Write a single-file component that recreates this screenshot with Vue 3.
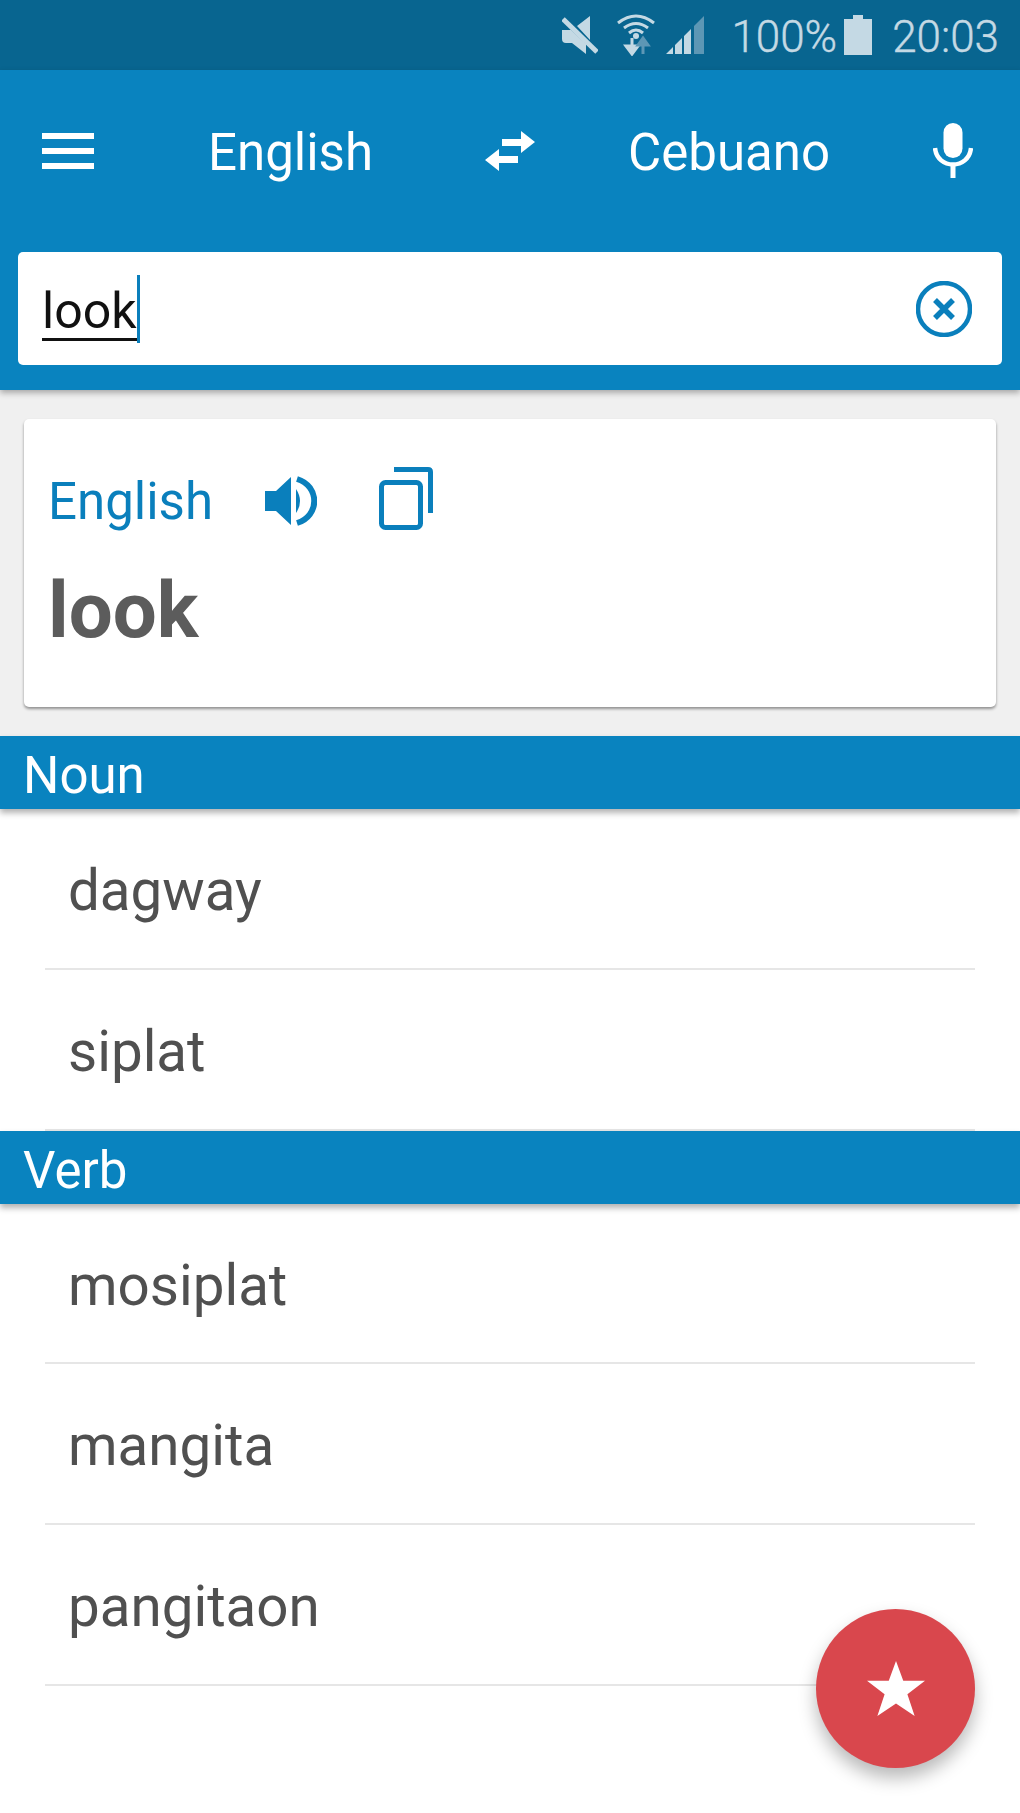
<template>
  <div class="app">
    <div class="status-bar">
      <svg class="st-mute" viewBox="0 0 36 38">
        <path class="st-fill" d="M0 14 L9 14 L24 28 L24 38 L10 27 L4 27 Q0 27 0 23 Z M15 10 L28 0 L28 24 Z" />
        <path class="st-line" d="M1 3 L35 36" />
      </svg>
      <svg class="st-wifi" viewBox="0 0 38 42">
        <path class="st-arc" d="M1 9 Q19 -5 37 9 M7 14 Q19 5 31 14 M12 19 Q19 13 26 19" />
        <circle cx="19" cy="22" r="3" fill="#c4d9e4" />
        <path class="st-arrow" d="M15 24 V33 M9 32 L15 40 L21 32 Z" />
        <path class="st-arrow dim" d="M26 40 V30 M21 31 L26 24 L31 31 Z" />
      </svg>
      <svg class="st-signal" viewBox="0 0 39 38">
        <path fill="#c4d9e4" d="M0 38 L7 31 V38 Z M9 29 L16 22 V38 H9 Z M18 20 L25 13 V38 H18 Z" />
        <path fill="#5d97b5" d="M28 10 L38 0 V38 H28 Z" />
      </svg>
      <span class="st-text">100%</span>
      <svg class="st-battery" viewBox="0 0 28 40">
        <path fill="#c4d9e4" d="M9 0 H19 V4 H28 V40 H0 V4 H9 Z" />
      </svg>
      <span class="st-text st-time">20:03</span>
    </div>

    <header class="toolbar">
      <div class="lang-row">
        <div class="menu-icon"><i></i><i></i><i></i></div>
        <span class="lang lang-from">English</span>
        <svg class="swap-icon" viewBox="0 0 50 40">
          <path fill="#fff" d="M36 0 L50 11 L36 22 V15 H17 V8 H36 Z M14 18 V25 H33 V32 H14 V40 L0 29 Z" />
        </svg>
        <span class="lang lang-to">Cebuano</span>
        <svg class="mic-icon" viewBox="0 0 40 55">
          <rect x="10.5" y="0" width="19" height="35" rx="9.5" fill="#fff" />
          <path d="M2 25 C4 47 36 47 38 25" fill="none" stroke="#fff" stroke-width="4.5" />
          <path d="M20 40 V55" stroke="#fff" stroke-width="5" />
        </svg>
      </div>
      <div class="search-box">
        <span class="search-text">look</span><span class="caret"></span>
        <svg class="clear-icon" viewBox="0 0 56 56">
          <circle cx="28" cy="28" r="26" fill="none" stroke="#0a7fbc" stroke-width="4.5" />
          <path d="M19 19 L37 37 M37 19 L19 37" stroke="#0a7fbc" stroke-width="5.5" />
        </svg>
      </div>
    </header>

    <div class="source-wrap">
      <div class="card">
        <div class="card-head">
          <span class="card-lang">English</span>
          <svg class="speak-icon" viewBox="0 0 52 50">
            <path fill="#0a7fbc" d="M0 15 H11 L26 1 V49 L11 35 H0 Z" />
            <path fill="#0a7fbc" d="M31 13 Q39 25 31 37 Z" />
            <path d="M32 3 C55 10 55 40 32 47" fill="none" stroke="#0a7fbc" stroke-width="6" />
          </svg>
          <svg class="copy-icon" viewBox="0 0 54 63">
            <rect x="2.5" y="15.5" width="39" height="45" rx="4" fill="none" stroke="#0a7fbc" stroke-width="5" />
            <path d="M15 2.5 H49 Q51.5 2.5 51.5 5 V46" fill="none" stroke="#0a7fbc" stroke-width="5" />
          </svg>
        </div>
        <div class="card-word">look</div>
      </div>
    </div>

    <section v-for="group in groups" :key="group.name">
      <div class="band">{{ group.name }}</div>
      <ul class="words">
        <li v-for="w in group.words" :key="w">{{ w }}</li>
      </ul>
    </section>

    <button class="fab">
      <svg viewBox="0 0 56 54">
        <path fill="#fff" d="M28 0 L35 19 L56 19 L39 32 L46 53 L28 41 L10 53 L17 32 L0 19 L21 19 Z" />
      </svg>
    </button>
  </div>
</template>

<script setup>
const groups = [
  { name: 'Noun', words: ['dagway', 'siplat'] },
  { name: 'Verb', words: ['mosiplat', 'mangita', 'pangitaon'] },
];
</script>

<style scoped>
.app {
  position: relative;
  width: 1020px;
  height: 1813px;
  overflow: hidden;
  background: #fff;
  font-family: Roboto, "Liberation Sans", sans-serif;
}

.status-bar {
  display: flex;
  align-items: center;
  height: 70px;
  padding-right: 21px;
  justify-content: flex-end;
  box-sizing: border-box;
  background: #086590;
}

.st-fill { fill: #c4d9e4; }
.st-line { stroke: #c4d9e4; stroke-width: 5; }
.st-arc { fill: none; stroke: #c4d9e4; stroke-width: 3; }
.st-arrow { fill: #c4d9e4; stroke: #c4d9e4; stroke-width: 3; }
.st-arrow.dim { fill: #5d97b5; stroke: #5d97b5; }

.st-mute { width: 36px; height: 38px; margin-right: 19px; }
.st-wifi { width: 38px; height: 42px; margin-right: 11px; }
.st-signal { width: 39px; height: 38px; margin-right: 26px; }
.st-text {
  padding-top: 4px;
  font-size: 44px;
  font-weight: 300;
  -webkit-text-stroke: 0.4px #c4d9e4;
  color: #c4d9e4;
  line-height: 1;
}
.st-battery { width: 28px; height: 40px; margin: 0 20px 0 7px; }

.toolbar {
  height: 320px;
  padding: 0 18px;
  box-sizing: border-box;
  background: #0983bf;
  box-shadow: 0 3px 6px rgba(0, 0, 0, 0.3);
  position: relative;
}

.lang-row {
  display: flex;
  align-items: center;
  height: 161px;
  padding-left: 24px;
  color: #fff;
}

.menu-icon {
  display: flex;
  flex-direction: column;
  gap: 9px;
  width: 52px;
  margin-right: 114px;
}
.menu-icon i {
  display: block;
  height: 6px;
  background: #fff;
}

.lang {
  padding-top: 3px;
  font-size: 51px;
  line-height: 1;
}

.swap-icon { width: 50px; height: 40px; margin: 0 93px 0 112px; }
.mic-icon { width: 40px; height: 55px; margin-left: 103px; }

.search-box {
  display: flex;
  align-items: center;
  height: 113px;
  margin-top: 21px;
  padding-left: 24px;
  border-radius: 5px;
  background: #fff;
}

.search-text {
  padding-top: 8px;
  font-size: 50px;
  color: #111;
  line-height: 1.08;
  border-bottom: 3px solid #111;
}

.caret {
  width: 3px;
  height: 68px;
  background: #0a7fbc;
}

.clear-icon {
  width: 56px;
  height: 56px;
  margin-left: auto;
  margin-right: 30px;
}

.source-wrap {
  padding: 29px 24px;
  background: #f0f0f0;
}

.card {
  height: 288px;
  padding: 0 24px;
  box-sizing: border-box;
  border-radius: 5px;
  background: #fff;
  box-shadow: 0 2px 3px rgba(0, 0, 0, 0.4);
}

.card-head {
  display: flex;
  align-items: center;
  height: 80px;
  padding-top: 42px;
}

.card-lang {
  font-size: 51px;
  color: #0a7fbc;
  line-height: 1;
}

.speak-icon { width: 52px; height: 50px; margin-left: 52px; }
.copy-icon { width: 54px; height: 63px; margin: -6px 0 0 62px; }

.card-word {
  margin-top: 23px;
  font-size: 78px;
  font-weight: 700;
  color: #5c5c5c;
  line-height: 1.2;
}

.band {
  height: 73px;
  padding-left: 23px;
  font-size: 51px;
  line-height: 80px;
  color: #fff;
  background: #0983bf;
  box-shadow: 0 4px 6px rgba(0, 0, 0, 0.3);
  position: relative;
}

.words {
  margin: 0;
  padding: 0 45px;
  list-style: none;
}

.words li {
  height: 161px;
  padding-left: 23px;
  box-sizing: border-box;
  border-bottom: 2px solid #e6e6e6;
  font-size: 56.5px;
  line-height: 165px;
  color: #505050;
}

section + section .words li:first-child { height: 160px; }

.fab {
  position: absolute;
  left: 816px;
  top: 1609px;
  display: flex;
  align-items: center;
  justify-content: center;
  width: 159px;
  height: 159px;
  padding: 0;
  border: 0;
  border-radius: 50%;
  background: #d9474d;
  box-shadow: 0 10px 18px rgba(0, 0, 0, 0.28);
}

.fab svg {
  width: 58px;
  height: 56px;
}
</style>
